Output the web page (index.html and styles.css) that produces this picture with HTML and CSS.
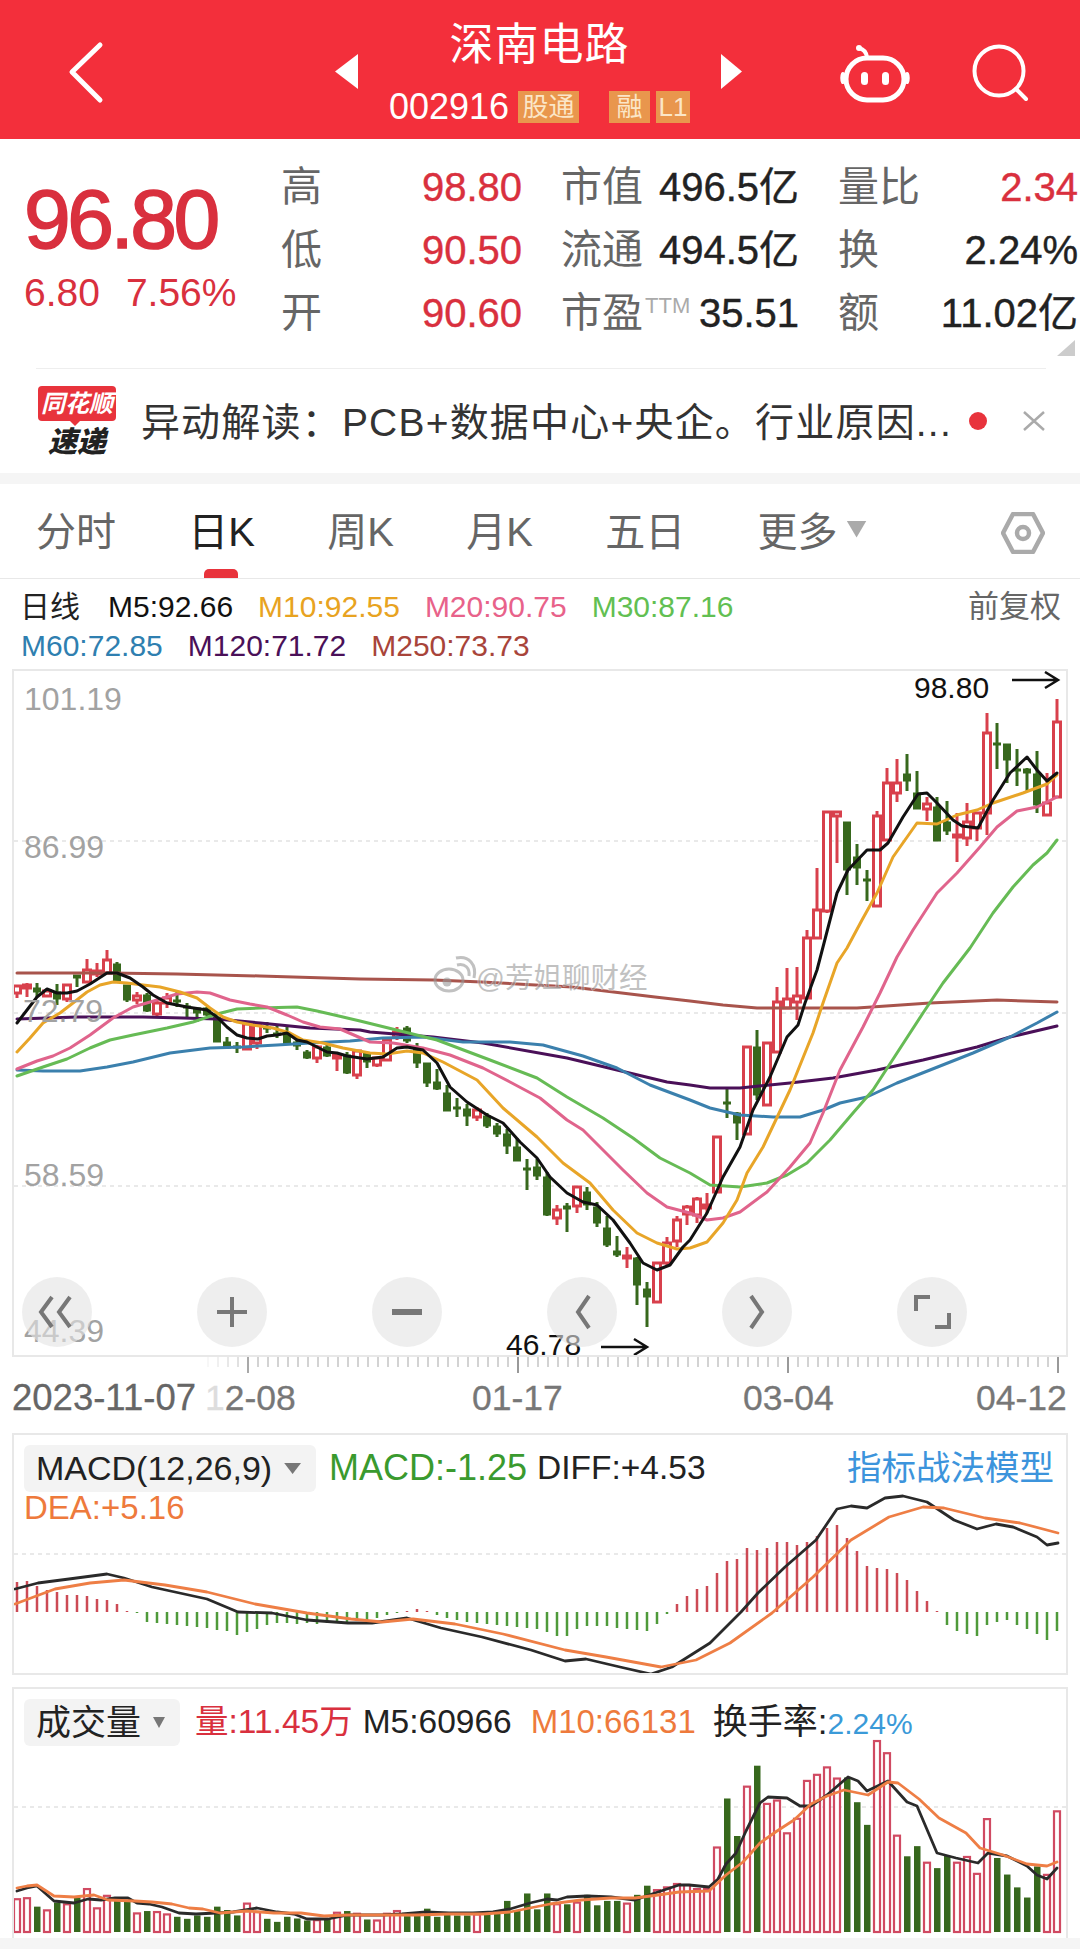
FILE: index.html
```html
<!DOCTYPE html>
<html lang="zh-CN">
<head>
    <meta charset="UTF-8">
    <meta name="viewport" content="width=device-width, initial-scale=1.0">
    <title>深南电路 002916</title>
    <link rel="stylesheet" href="styles.css">
</head>
<body>
    <header class="topbar">
        <div class="back">
            <svg width="40" height="66" viewBox="0 0 40 66"><path d="M32 4 L4 31 L32 59" class="icon-white"/></svg>
        </div>
        <div class="switcher">
            <svg width="23" height="35" viewBox="0 0 23 35"><polygon points="23,0 23,35 0,17.5" fill="#fff"/></svg>
            <div class="stock">
                <div class="stock-name">深南电路</div>
                <div class="stock-code">
                    <span class="code-num">002916</span>
                    <span class="tag tag-wide">股通</span>
                    <span class="tag tag-rong">融</span>
                    <span class="tag tag-l1">L1</span>
                </div>
            </div>
            <svg width="21" height="35" viewBox="0 0 21 35"><polygon points="0,0 21,17.5 0,35" fill="#fff"/></svg>
        </div>
        <div class="top-actions">
            <svg width="70" height="62" viewBox="0 0 70 62">
                <path d="M27 14 C26 8 23 6 19 5" class="icon-white thin"/>
                <circle cx="19" cy="5" r="3" fill="#fff"/>
                <rect x="6" y="15" width="58" height="42" rx="21" class="icon-white"/>
                <path d="M3 31 C2 33 2 37 3 39 M67 31 C68 33 68 37 67 39" class="icon-white thin"/>
                <rect x="21" y="29" width="7" height="13" rx="3.5" fill="#fff"/>
                <rect x="42" y="29" width="7" height="13" rx="3.5" fill="#fff"/>
            </svg>
            <svg width="62" height="62" viewBox="0 0 62 62">
                <circle cx="28" cy="28" r="24.5" class="icon-white thin"/>
                <path d="M45 46 L55 56" class="icon-white thin"/>
            </svg>
        </div>
    </header>

    <section class="quote">
        <div class="price-box">
            <div class="price">96.80</div>
            <div class="change"><span>6.80</span><span>7.56%</span></div>
        </div>
        <div class="stats">
            <div class="stat"><span class="stat-label">高</span><span class="up">98.80</span></div>
            <div class="stat"><span class="stat-label">市值</span><span>496.5亿</span></div>
            <div class="stat"><span class="stat-label">量比</span><span class="up">2.34</span></div>
            <div class="stat"><span class="stat-label">低</span><span class="up">90.50</span></div>
            <div class="stat"><span class="stat-label">流通</span><span>494.5亿</span></div>
            <div class="stat"><span class="stat-label">换</span><span>2.24%</span></div>
            <div class="stat"><span class="stat-label">开</span><span class="up">90.60</span></div>
            <div class="stat"><span class="stat-label">市盈<sup class="ttm">TTM</sup></span><span>35.51</span></div>
            <div class="stat"><span class="stat-label">额</span><span>11.02亿</span></div>
        </div>
        <div class="corner"></div>
    </section>

    <section class="news">
        <div class="news-logo">
            <div class="logo-top">同花顺</div>
            <div class="logo-bottom">速递</div>
        </div>
        <div class="news-text">异动解读：PCB+数据中心+央企。行业原因...</div>
        <span class="news-dot"></span>
        <svg class="news-close" width="24" height="20" viewBox="0 0 24 20"><path d="M2 1 L22 19 M22 1 L2 19"/></svg>
    </section>

    <div class="band"></div>

    <nav class="tabs">
        <div class="tab">分时</div>
        <div class="tab active">日K</div>
        <div class="tab">周K</div>
        <div class="tab">月K</div>
        <div class="tab">五日</div>
        <div class="tab">更多<span class="tab-arrow"></span></div>
        <svg class="tab-hex" width="44" height="42" viewBox="0 0 44 42">
            <polygon points="12,2 32,2 42,21 32,40 12,40 2,21"/>
            <circle cx="22" cy="21" r="6"/>
        </svg>
    </nav>

    <section class="legend">
        <div class="legend-row">
            <span class="legend-title">日线</span>
            <span class="c-m5">M5:92.66</span>
            <span class="c-m10">M10:92.55</span>
            <span class="c-m20">M20:90.75</span>
            <span class="c-m30">M30:87.16</span>
            <span class="legend-right">前复权</span>
        </div>
        <div class="legend-row">
            <span class="c-m60">M60:72.85</span>
            <span class="c-m120">M120:71.72</span>
            <span class="c-m250">M250:73.73</span>
        </div>
    </section>

    <section class="panel panel-main">
        <svg id="kline" width="1052" height="684" viewBox="14 671 1052 684"></svg>
        <div class="chart-btns">
            <div class="chart-btn"><svg width="70" height="70" viewBox="0 0 70 70"><path d="M30 20 L19 35 L30 50 M48 20 L37 35 L48 50"/></svg></div>
            <div class="chart-btn"><svg width="70" height="70" viewBox="0 0 70 70"><path d="M35 20 V50 M20 35 H50"/></svg></div>
            <div class="chart-btn"><svg width="70" height="70" viewBox="0 0 70 70"><path d="M20 35 H50" class="thick"/></svg></div>
            <div class="chart-btn"><svg width="70" height="70" viewBox="0 0 70 70"><path d="M42 19 L31 35 L42 51"/></svg></div>
            <div class="chart-btn"><svg width="70" height="70" viewBox="0 0 70 70"><path d="M29 19 L40 35 L29 51"/></svg></div>
            <div class="chart-btn"><svg width="70" height="70" viewBox="0 0 70 70"><path d="M19 34 V20 H33 M52 36 V50 H38"/></svg></div>
        </div>
    </section>

    <section class="axis">
        <svg id="ticks" width="1056" height="16" viewBox="12 1357 1056 16"></svg>
        <div class="dates">
            <span class="date-first">2023-11-07</span>
            <span><span class="date-fade">1</span>2-08</span>
            <span>01-17</span>
            <span>03-04</span>
            <span>04-12</span>
        </div>
    </section>

    <section class="panel panel-macd">
        <svg id="macd" width="1052" height="238" viewBox="14 1435 1052 238"></svg>
        <div class="panel-head">
            <div class="select select-macd">MACD(12,26,9)<span class="select-arrow"></span></div>
            <span class="c-green head-macd">MACD:-1.25</span>
            <span class="c-dark">DIFF:+4.53</span>
            <span class="head-link">指标战法模型</span>
            <div class="head-line2 c-orange">DEA:+5.16</div>
        </div>
    </section>

    <section class="panel panel-vol">
        <svg id="vol" width="1052" height="249" viewBox="14 1689 1052 249"></svg>
        <div class="panel-head">
            <div class="select select-vol">成交量<span class="select-arrow"></span></div>
            <span class="c-red">量:11.45万</span>
            <span class="c-dark">M5:60966</span>
            <span class="c-orange head-m10">M10:66131</span>
            <span class="c-dark head-turnover">换手率:<span class="c-blue head-rate">2.24%</span></span>
        </div>
    </section>

    <div class="footer-band"></div>

    <script src="charts.js"></script>
</body>
</html>
```

FILE: styles.css
```css
* {
    box-sizing: border-box;
}
body {
    margin: 0;
    width: 1080px;
    height: 1949px;
    overflow: hidden;
    background: #fff;
    font-family: "Liberation Sans", "Noto Sans CJK SC", sans-serif;
    color: #222;
}
.icon-white {
    fill: none;
    stroke: #fff;
    stroke-width: 5;
    stroke-linecap: round;
    stroke-linejoin: round;
}
.icon-white.thin {
    stroke-width: 4;
}

/* top bar */
.topbar {
    height: 139px;
    background: #f32f3b;
    color: #fff;
    display: grid;
    grid-template-columns: 335px 407px 338px;
    align-items: center;
}
.back {
    padding: 9px 0 0 68px;
    display: flex;
}
.switcher {
    display: flex;
    justify-content: space-between;
    align-items: center;
    padding-top: 3px;
}
.stock {
    text-align: center;
}
.stock-name {
    font-size: 44px;
    line-height: 52px;
    letter-spacing: 1px;
}
.stock-code {
    display: flex;
    align-items: center;
    margin-top: 20px;
    height: 32px;
}
.code-num {
    font-size: 36px;
    width: 129px;
    text-align: left;
}
.tag {
    height: 32px;
    line-height: 32px;
    background: #e9964d;
    color: #fbe6c8;
    font-size: 26px;
    text-align: center;
}
.tag-wide {
    width: 61px;
}
.tag-rong {
    width: 41px;
    margin-left: 30px;
}
.tag-l1 {
    width: 34px;
    margin-left: 6px;
}
.top-actions {
    display: flex;
    align-items: center;
    padding: 9px 0 0 98px;
    gap: 61px;
}

/* quote */
.quote {
    position: relative;
    height: 229px;
    display: flex;
    padding-top: 17px;
}
.price-box {
    width: 281px;
    padding-left: 24px;
    color: #d9303e;
}
.price {
    font-size: 84px;
    line-height: 92px;
    letter-spacing: -3.5px;
    -webkit-text-stroke: 1.6px #d9303e;
    margin-top: 17px;
}
.change {
    display: flex;
    gap: 26px;
    font-size: 39px;
    line-height: 44px;
    margin-top: 6px;
}
.stats {
    display: grid;
    grid-template-columns: 241px 238px 240px;
    grid-auto-rows: 63px;
    column-gap: 39px;
    font-size: 40px;
    line-height: 63px;
    align-self: flex-start;
}
.stat {
    display: flex;
    justify-content: space-between;
    align-items: baseline;
    white-space: nowrap;
    -webkit-text-stroke: 0.4px;
}
.stat-label {
    color: #666;
    font-size: 41px;
    -webkit-text-stroke: 0;
}
.up {
    color: #d9303e;
}
.ttm {
    font-size: 22px;
    color: #aaa;
    vertical-align: 14px;
    line-height: 0;
    margin-left: 2px;
}
.corner {
    position: absolute;
    right: 5px;
    bottom: 12px;
    width: 18px;
    height: 16px;
    background: #ccc;
    clip-path: polygon(100% 0, 100% 100%, 0 100%);
}

/* news */
.news {
    height: 105px;
    margin: 0 34px 0 36px;
    border-top: 1.5px solid #eee;
    display: flex;
    align-items: center;
}
.news-logo {
    width: 103px;
    margin-left: 2px;
    margin-top: 2px;
}
.logo-top {
    position: relative;
    width: 78px;
    height: 35px;
    line-height: 35px;
    background: #e8333c;
    border-radius: 4px;
    color: #fff;
    font-size: 24px;
    font-weight: 700;
    font-style: italic;
    text-align: center;
    margin-bottom: 5px;
}
.logo-top::after {
    content: "";
    position: absolute;
    left: 32px;
    bottom: -5px;
    width: 10px;
    height: 5px;
    background: #e8333c;
    clip-path: polygon(0 0, 100% 0, 50% 100%);
}
.logo-bottom {
    width: 78px;
    font-size: 29px;
    line-height: 32px;
    font-weight: 900;
    font-style: italic;
    color: #222;
    text-align: center;
}
.news-text {
    font-size: 39px;
    letter-spacing: 1.2px;
    color: #333;
    white-space: nowrap;
    width: 830px;
    margin-bottom: 4px;
}
.news-dot {
    width: 18px;
    height: 18px;
    border-radius: 50%;
    background: #e8333c;
    margin-left: -1px;
    flex: none;
}
.news-close {
    margin-left: 35px;
    flex: none;
}
.news-close path {
    stroke: #aaa;
    stroke-width: 2.5;
    fill: none;
}
.band {
    height: 11px;
    background: #f5f5f5;
}

/* tabs */
.tabs {
    height: 95px;
    border-bottom: 1.5px solid #e8e8e8;
    display: flex;
    align-items: center;
    gap: 72.3px;
    padding: 0 35px 0 36px;
    font-size: 40px;
    color: #666;
}
.tab {
    position: relative;
    height: 100%;
    display: flex;
    align-items: center;
    padding-bottom: 4px;
}
.tab.active {
    color: #222;
}
.tab.active::after {
    content: "";
    position: absolute;
    left: 16px;
    bottom: 0;
    width: 34px;
    height: 9px;
    background: #e8333c;
    border-radius: 5px 5px 0 0;
}
.tab-arrow {
    width: 20px;
    height: 17px;
    margin: 0 0 0 9px;
    background: #aaa;
    clip-path: polygon(0 0, 100% 0, 50% 100%);
}
.tab-hex {
    margin-left: auto;
    margin-top: 4px;
}
.tab-hex polygon,
.tab-hex circle {
    fill: none;
    stroke: #aaa;
    stroke-width: 4.5;
    stroke-linejoin: round;
}

/* legend */
.legend {
    height: 90px;
    padding: 9px 19px 0 20px;
    font-size: 30px;
}
.legend-row {
    display: flex;
    gap: 25px;
    height: 39px;
    line-height: 38px;
}
.legend-row:last-child {
    margin-left: 1px;
}
.legend-title {
    margin-right: 3px;
}
.legend-right {
    margin-left: auto;
    color: #666;
    font-size: 31px;
}
.c-m5 { color: #111; }
.c-m10 { color: #e8a321; }
.c-m20 { color: #e8628a; }
.c-m30 { color: #62bf52; }
.c-m60 { color: #2f7fb0; }
.c-m120 { color: #4a1058; }
.c-m250 { color: #a8443a; }

/* chart panels */
.panel {
    position: relative;
    margin: 0 12px;
    border: 2px solid #e8e8e8;
}
.panel svg {
    display: block;
}
.panel-main {
    height: 688px;
}
.panel-macd {
    height: 242px;
}
.panel-vol {
    height: 251px;
    margin-top: 12px;
    border-bottom: none;
}
.chart-btns {
    position: absolute;
    left: 8px;
    bottom: 8px;
    display: flex;
    gap: 105px;
}
.chart-btn {
    width: 70px;
    height: 70px;
    border-radius: 50%;
    background: rgba(226, 226, 226, 0.6);
}
.chart-btn path {
    fill: none;
    stroke: #777;
    stroke-width: 4;
}
.chart-btn path.thick {
    stroke-width: 6;
}
.axis {
    height: 76px;
}
.axis svg {
    display: block;
    margin-left: 12px;
}
.dates {
    display: grid;
    grid-template-columns: 193px 267px 271px 233px 92px;
    padding-left: 12px;
    font-size: 35.5px;
    line-height: 42px;
    margin-top: 4px;
    color: #777;
    white-space: nowrap;
    -webkit-text-stroke: 0.3px;
}
.date-first {
    color: #666;
    font-size: 36.5px;
}
.date-fade {
    color: #ddd;
}
.panel-head {
    position: absolute;
    left: 10px;
    right: 12px;
    top: 10px;
    display: flex;
    flex-wrap: wrap;
    align-items: flex-start;
    gap: 0 10px;
    font-size: 33.5px;
    line-height: 46px;
    white-space: nowrap;
}
.select {
    height: 47px;
    line-height: 47px;
    background: #f3f3f3;
    border-radius: 6px;
    padding: 0 15px 0 12px;
    color: #222;
    font-size: 34px;
    display: flex;
    align-items: center;
    margin-right: 3px;
}
.select-macd {
    width: 292px;
}
.select-vol {
    width: 156px;
    margin-right: 5px;
    font-size: 35px;
}
.select-arrow {
    width: 17px;
    height: 11px;
    margin-left: 12px;
    background: #777;
    clip-path: polygon(0 0, 100% 0, 50% 100%);
}
.head-macd {
    font-size: 36px;
}
.head-m10 {
    margin-left: 9px;
    font-size: 33px;
}
.head-turnover {
    margin-left: 7px;
    font-size: 35px;
}
.head-rate {
    font-size: 30px;
}
.head-link {
    margin-left: auto;
    color: #3c94dc;
    font-size: 34.5px;
}
.head-line2 {
    width: 100%;
    line-height: 40px;
    margin-top: -4px;
    font-size: 33px;
}
.c-green { color: #3a9a2e; }
.c-dark { color: #222; }
.c-orange { color: #ee7a3c; }
.c-red { color: #d9303e; }
.c-blue { color: #3a9ad8; }
.footer-band {
    height: 11px;
    background: #f5f5f5;
}
```

FILE: charts.js
```js
const SVG_NS = 'http://www.w3.org/2000/svg';
const RED = '#d8404c';
const GREEN = '#37681d';
const xOf = i => 17 + 10 * i;

function add(svg, tag, attrs, text) {
    const el = document.createElementNS(SVG_NS, tag);
    for (const k in attrs) el.setAttribute(k, attrs[k]);
    if (text) el.textContent = text;
    svg.appendChild(el);
    return el;
}

function line(svg, x1, y1, x2, y2, color, width, dash) {
    const attrs = { x1, y1, x2, y2, stroke: color, 'stroke-width': width };
    if (dash) attrs['stroke-dasharray'] = dash;
    add(svg, 'line', attrs);
}

function curve(svg, points, color, width) {
    add(svg, 'polyline', {
        points, fill: 'none', stroke: color, 'stroke-width': width,
        'stroke-linejoin': 'round', 'stroke-linecap': 'round'
    });
}

// K线: 类型, 最高, 实体上沿, 实体下沿, 最低 (屏幕 y)
const candles = [
    ['r',985,986,993,998], ['r',983,985,988,997], ['g',983,988,992,997], ['r',990,991,996,997], ['g',984,992,999,1005],
    ['r',985,985,999,1002], ['g',975,975,978,987], ['r',959,970,982,983], ['r',963,971,974,977], ['r',950,960,973,973],
    ['g',962,964,981,982], ['g',985,985,1000,1002], ['r',992,996,1000,1004], ['g',993,995,1011,1012], ['r',1000,1003,1014,1018],
    ['r',993,998,1003,1008], ['g',992,1000,1002,1007], ['g',1003,1006,1008,1018], ['g',1008,1008,1013,1022], ['g',1007,1008,1015,1016],
    ['g',1017,1017,1042,1042], ['g',1037,1042,1048,1049], ['g',1042,1046,1047,1053], ['r',1024,1024,1049,1049], ['r',1025,1025,1043,1049],
    ['g',1022,1027,1028,1033], ['g',1026,1033,1035,1038], ['g',1026,1033,1044,1045], ['g',1038,1042,1046,1050], ['g',1050,1052,1058,1059],
    ['r',1045,1047,1058,1063], ['g',1045,1047,1056,1057], ['r',1052,1055,1058,1071], ['g',1052,1055,1073,1074], ['r',1050,1051,1075,1079],
    ['g',1052,1053,1062,1068], ['r',1057,1058,1065,1067], ['r',1037,1040,1060,1060], ['r',1027,1032,1037,1040], ['g',1026,1028,1041,1043],
    ['g',1043,1048,1063,1068], ['g',1063,1063,1083,1087], ['g',1069,1082,1089,1090], ['g',1085,1093,1111,1111], ['g',1098,1107,1109,1117],
    ['g',1104,1109,1116,1126], ['r',1107,1110,1117,1121], ['g',1113,1116,1126,1128], ['g',1123,1126,1134,1137], ['g',1129,1134,1146,1154],
    ['g',1138,1147,1161,1161], ['g',1159,1168,1169,1190], ['g',1159,1167,1176,1180], ['g',1172,1177,1215,1216], ['r',1205,1210,1218,1225],
    ['g',1203,1206,1209,1232], ['r',1186,1187,1206,1213], ['g',1187,1192,1205,1210], ['g',1202,1207,1223,1227], ['g',1216,1228,1245,1247],
    ['g',1236,1251,1255,1257], ['r',1247,1256,1257,1268], ['g',1257,1258,1285,1305], ['g',1282,1289,1297,1327], ['r',1263,1263,1302,1302],
    ['r',1237,1243,1263,1266], ['r',1216,1220,1241,1247], ['r',1205,1207,1214,1225], ['r',1197,1199,1215,1223], ['r',1193,1205,1208,1213],
    ['r',1137,1137,1192,1192], ['g',1089,1102,1104,1118], ['g',1112,1113,1123,1140], ['r',1047,1047,1134,1134], ['g',1030,1047,1095,1100],
    ['r',1043,1043,1105,1105], ['r',987,1002,1052,1052], ['r',968,999,1008,1008], ['r',967,996,1002,1020], ['r',930,938,998,998],
    ['r',868,910,938,938], ['r',812,812,911,913], ['r',811,812,816,863], ['g',822,822,870,895], ['g',844,857,868,885],
    ['g',870,879,881,901], ['r',811,816,906,907], ['r',768,783,840,840], ['r',759,783,793,802], ['g',754,774,781,791],
    ['g',771,793,809,809], ['r',797,804,809,821], ['g',797,807,841,841], ['g',801,822,831,835], ['r',813,835,837,862],
    ['r',803,822,838,846], ['r',812,813,828,841], ['r',713,733,813,835], ['g',723,743,744,769], ['g',744,744,760,783],
    ['g',749,769,770,786], ['g',768,769,773,792], ['g',751,774,805,813], ['r',773,803,815,815], ['r',699,722,797,797]
];

const ma = [
    // M250
    ['#a8544c', '17,973 70,973 110,973 177,974 260,976 360,979 434,980 482,982 572,987 655,997 690,1001 723,1005 757,1008 790,1008 857,1008 930,1003 997,1000 1057,1002'],
    // M120
    ['#4a1058', '17,1019 77,1017 143,1017 183,1018 217,1019 260,1023 310,1028 360,1030 370,1032 433,1037 483,1043 567,1058 617,1070 667,1082 690,1085 710,1088 740,1088 790,1083 833,1078 877,1070 923,1060 977,1047 1010,1037 1057,1026'],
    // M60
    ['#3b80ad', '17,1070 43,1071 80,1071 107,1067 133,1062 170,1053 210,1048 243,1047 277,1045 310,1043 350,1041 383,1038 423,1037 463,1042 510,1042 543,1045 583,1056 617,1068 650,1085 690,1100 710,1108 740,1115 773,1117 800,1117 823,1110 840,1103 867,1097 897,1083 930,1070 973,1053 1010,1037 1037,1023 1057,1012'],
    // M30
    ['#66bb55', '17,1076 43,1067 67,1059 90,1048 110,1040 133,1035 167,1028 193,1022 217,1014 237,1009 260,1008 297,1007 317,1011 343,1017 360,1021 437,1040 490,1060 537,1078 567,1097 603,1118 633,1138 660,1158 690,1173 710,1185 740,1187 767,1183 787,1175 807,1163 830,1140 853,1113 873,1090 897,1053 923,1013 943,983 970,948 993,913 1013,887 1033,865 1047,853 1057,840'],
    // M20
    ['#e0648c', '17,1069 37,1061 53,1056 70,1048 90,1035 113,1018 133,1007 157,1000 177,994 197,992 210,993 230,1000 250,1004 267,1007 287,1015 303,1022 320,1027 340,1029 370,1042 393,1043 423,1048 450,1055 483,1068 510,1082 540,1098 567,1120 583,1130 603,1150 623,1170 647,1193 667,1207 690,1213 707,1220 723,1218 740,1212 767,1192 790,1167 810,1143 823,1113 840,1070 863,1027 880,993 897,957 913,930 937,893 957,873 980,847 997,827 1017,811 1037,807 1057,797'],
    // M10
    ['#e8a528', '17,1052 30,1038 43,1023 60,1013 73,1003 87,992 100,985 113,982 127,983 143,985 160,987 180,992 197,998 210,1008 223,1017 237,1022 253,1025 273,1028 290,1033 303,1040 323,1043 343,1048 370,1053 387,1054 407,1051 423,1053 443,1062 477,1080 503,1108 537,1137 563,1163 590,1183 613,1210 637,1233 657,1243 677,1249 690,1248 707,1242 723,1223 737,1200 747,1173 763,1147 790,1090 813,1033 823,1003 837,963 847,948 862,920 877,893 893,857 917,823 937,824 957,815 977,810 993,803 1023,793 1047,784 1057,775'],
    // M5
    ['#111', '17,1023 27,1010 37,997 47,989 57,993 67,993 77,991 90,984 107,973 117,973 130,978 143,987 153,995 167,1003 187,1007 207,1010 217,1017 227,1027 237,1035 247,1038 258,1039 267,1036 277,1035 287,1033 297,1040 307,1042 317,1047 327,1052 337,1053 347,1056 367,1059 383,1057 397,1048 407,1047 423,1050 437,1063 450,1087 467,1102 487,1115 503,1123 520,1142 537,1158 550,1177 567,1193 583,1202 597,1205 613,1220 630,1243 643,1263 657,1270 670,1265 683,1247 690,1240 707,1213 723,1177 740,1147 753,1110 770,1077 787,1037 798,1025 805,1003 817,970 823,947 837,893 848,870 867,850 880,850 888,843 903,817 918,794 927,793 937,803 953,820 962,826 978,828 993,800 1010,773 1027,757 1037,770 1047,781 1057,773']
];

function drawKline() {
    const svg = document.getElementById('kline');
    [841, 1013, 1186].forEach(y => line(svg, 14, y, 1066, y, '#e2e2e2', 1.5, '4 4'));

    candles.forEach((c, i) => {
        const [type, high, top, bottom, low] = c;
        const x = xOf(i);
        const color = type === 'r' ? RED : GREEN;
        line(svg, x, high, x, low, color, 3);
        add(svg, 'rect', {
            x: x - 3.5, y: top, width: 7, height: Math.max(bottom - top, 2),
            fill: type === 'r' ? '#fff' : color,
            stroke: color, 'stroke-width': type === 'r' ? 3 : 1
        });
    });

    ma.forEach(m => curve(svg, m[1], m[0], 3));

    // 价格刻度
    [['101.19', 24, 710], ['86.99', 24, 858], ['72.79', 23, 1022], ['58.59', 24, 1186], ['44.39', 24, 1342]].forEach(t => {
        add(svg, 'text', { x: t[1], y: t[2], 'font-size': 32, fill: '#a2a2a2' }, t[0]);
    });

    // 最高最低标注
    add(svg, 'text', { x: 914, y: 698, 'font-size': 30, fill: '#111' }, '98.80');
    add(svg, 'text', { x: 506, y: 1355, 'font-size': 30, fill: '#111' }, '46.78');
    [[1012, 680], [601, 1347]].forEach(p => {
        const [x, y] = p;
        add(svg, 'path', {
            d: `M${x} ${y} H${x + 46} M${x + 33} ${y - 8} L${x + 46} ${y} L${x + 33} ${y + 8}`,
            fill: 'none', stroke: '#111', 'stroke-width': 2.5
        });
    });

    // 水印
    const mark = add(svg, 'g', { opacity: 0.6 });
    add(mark, 'ellipse', { cx: 449, cy: 980, rx: 14, ry: 11, fill: 'none', stroke: '#999', 'stroke-width': 3 });
    add(mark, 'circle', { cx: 447, cy: 982, r: 4.5, fill: '#999' });
    add(mark, 'path', { d: 'M457 965 C465 963 470 968 469 976 M456 958 C469 955 477 965 474 978', fill: 'none', stroke: '#999', 'stroke-width': 3 });
    add(mark, 'text', { x: 476, y: 988, 'font-size': 28.5, fill: '#999', stroke: '#fff', 'stroke-width': 1, 'paint-order': 'stroke' }, '@芳姐聊财经');
}

function drawTicks() {
    const svg = document.getElementById('ticks');
    for (let x = 208; x <= 1058; x += 10) {
        const major = (x - 248) % 270 === 0;
        const faded = Math.min(1, (x - 198) / 60);
        add(svg, 'line', {
            x1: x, y1: 1357, x2: x, y2: major ? 1373 : 1367,
            stroke: major ? '#999' : '#c4c4c4', 'stroke-width': major ? 2 : 1.5, opacity: faded
        });
    }
}

// MACD柱, 正为红, 负为绿
const hist = [
    30,31,26,22,20,17,17,16,13,12,8,1,
    -1,-10,-11,-12,-13,-14,-15,-16,-18,-19,-23,-20,-17,-13,-11,-11,-12,-11,-12,-11,-10,-11,-9,-8,-6,-3,-1,
    1,3,1,
    -3,-6,-8,-10,-11,-12,-13,-14,-15,-16,-17,-20,-24,-24,-17,-14,-14,-14,-16,-17,-18,-19,-12,-2,
    8,16,23,26,39,51,53,64,62,64,70,70,67,70,76,84,87,74,61,46,44,43,39,32,21,11,1,
    -13,-19,-22,-24,-13,-10,-8,-13,-17,-22,-28,-19
];

function drawMacd() {
    const svg = document.getElementById('macd');
    line(svg, 14, 1554, 1066, 1554, '#e2e2e2', 1.5, '4 4');
    hist.forEach((h, i) => {
        const x = xOf(i);
        line(svg, x, 1612, x, 1612 - h, h > 0 ? '#cc4a55' : '#4f9a3a', 2.5);
    });
    curve(svg, '15,1589 38,1583 69,1579 107,1574 124,1578 152,1587 207,1599 238,1612 272,1613 307,1620 348,1623 372,1623 407,1618 441,1628 482,1637 531,1650 565,1661 586,1659 620,1667 651,1674 672,1667 710,1643 741,1612 758,1593 785,1567 816,1540 837,1509 851,1506 867,1508 885,1498 903,1496 927,1502 954,1520 977,1529 996,1524 1013,1527 1037,1537 1047,1545 1058,1543', '#2a2a2a', 2.8);
    curve(svg, '15,1604 55,1589 90,1583 124,1580 165,1585 207,1592 255,1604 307,1613 351,1619 382,1622 413,1619 455,1624 503,1634 565,1650 606,1657 661,1667 696,1660 730,1643 772,1613 813,1577 851,1540 889,1517 923,1507 944,1508 985,1518 1020,1523 1058,1533', '#ee7e45', 2.8);
}

// 成交量柱高度, 涨跌类型逐根对应
const volumes = [
    97,100,75,64,87,82,102,127,70,107,102,89,55,62,59,52,45,39,49,45,
    75,65,49,84,59,39,30,45,40,34,35,39,57,62,54,37,34,54,62,47,
    49,69,45,52,49,49,52,62,57,92,62,114,67,114,82,82,87,110,79,92,
    92,84,110,137,124,132,142,139,127,127,250,395,284,430,492,379,389,292,335,447,
    465,487,454,457,384,317,565,529,285,224,254,205,189,225,205,222,172,334,219,170,
    132,102,194,169,357
];
const volTypes = 'rrgrgrgrrr' + 'ggrgrrgggg' + 'gggrrggggg' + 'rgrgrgrrrg' + 'ggggggrggg' +
    'ggggrgrggg' + 'grggrrrrrr' + 'rggrgrrrrr' + 'rrrgggrrrg' + 'grggrrrrgg' + 'gggrr';

function drawVolume() {
    const svg = document.getElementById('vol');
    const base = 1932;
    line(svg, 14, 1807, 1066, 1807, '#e2e2e2', 1.5, '4 4');
    volumes.forEach((v, i) => {
        const x = xOf(i);
        const h = v * 0.338;
        if (volTypes[i] === 'r') {
            add(svg, 'rect', { x: x - 3, y: base - h, width: 6, height: h, fill: '#fff', stroke: '#d04a62', 'stroke-width': 2.2 });
        } else {
            add(svg, 'rect', { x: x - 3, y: base - h, width: 6.5, height: h, fill: GREEN });
        }
    });
    curve(svg, '17,1891 27,1888 37,1886 54,1901 74,1903 88,1899 101,1900 115,1898 128,1898 137,1903 149,1904 162,1907 179,1913 196,1914 216,1913 233,1912 257,1908 277,1912 294,1914 307,1919 328,1919 348,1915 382,1915 402,1914 426,1912 449,1913 473,1913 493,1912 510,1909 530,1903 547,1899 557,1900 567,1897 587,1896 611,1897 635,1900 655,1893 679,1885 689,1885 709,1887 718,1879 726,1864 736,1853 746,1831 760,1803 768,1797 787,1798 800,1806 811,1806 827,1795 848,1777 858,1781 867,1791 888,1781 907,1802 917,1806 937,1853 956,1858 978,1863 988,1853 1007,1856 1027,1866 1037,1875 1047,1879 1057,1868', '#2a2a2a', 2.8);
    curve(svg, '17,1888 27,1886 37,1885 54,1896 74,1897 94,1895 108,1900 135,1901 152,1902 172,1904 189,1908 203,1909 220,1913 247,1911 274,1913 301,1913 324,1916 348,1915 382,1915 416,1915 449,1914 483,1914 510,1912 530,1908 550,1904 581,1900 611,1898 635,1898 658,1895 679,1892 709,1891 726,1875 743,1862 760,1843 777,1831 794,1820 811,1804 827,1796 844,1790 868,1795 888,1782 898,1783 919,1799 939,1818 966,1833 980,1848 1003,1855 1027,1864 1047,1866 1057,1862', '#ee7e45', 2.8);
}

drawKline();
drawTicks();
drawMacd();
drawVolume();
```
